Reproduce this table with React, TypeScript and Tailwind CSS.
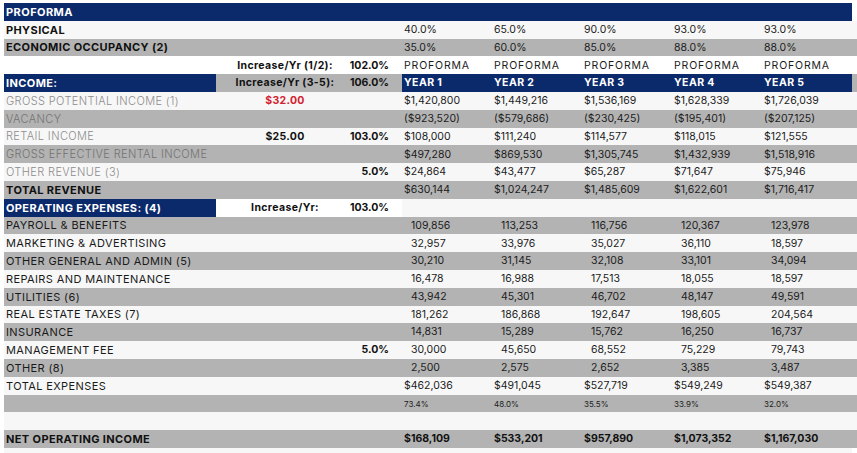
import React from "react";

const NAVY = "bg-[#0b2a6b]";
const GRAY = "bg-[#b3b3b3]";
const LIGHT = "bg-[#f7f7f7]";

type Row = {
  bg: string;
  label?: string;
  labelCls?: string;
  labelBg?: string;
  c2?: string;
  c2Cls?: string;
  c3?: string;
  c3Cls?: string;
  midBg?: string;
  years?: string[];
  yearCls?: string;
  yearBg?: string;
};

const labelGray = "text-[#8c8c8c] font-light";
const labelGrayDark = "text-[#727272] font-light";
const bold = "font-bold text-[#111]";
const mixed = "font-bold text-[#111] tracking-[0.035em]";
const wide = "tracking-[0.08em]";

const rows: Row[] = [
  { bg: LIGHT, label: "PHYSICAL", labelCls: bold, years: ["40.0%", "65.0%", "90.0%", "93.0%", "93.0%"] },
  { bg: GRAY, label: "ECONOMIC OCCUPANCY (2)", labelCls: bold, years: ["35.0%", "60.0%", "85.0%", "88.0%", "88.0%"] },
  { bg: "bg-white", c2: "Increase/Yr (1/2):", c2Cls: mixed, c3: "102.0%", c3Cls: bold, years: ["PROFORMA", "PROFORMA", "PROFORMA", "PROFORMA", "PROFORMA"], yearCls: wide },
  {
    bg: GRAY,
    label: "INCOME:",
    labelCls: "font-bold text-white",
    labelBg: NAVY,
    c2: "Increase/Yr (3-5):",
    c2Cls: mixed,
    c3: "106.0%",
    c3Cls: bold,
    years: ["YEAR 1", "YEAR 2", "YEAR 3", "YEAR 4", "YEAR 5"],
    yearCls: "font-bold text-white tracking-[0.04em]",
    yearBg: NAVY,
  },
  { bg: LIGHT, label: "GROSS POTENTIAL INCOME (1)", labelCls: labelGray, c2: "$32.00", c2Cls: "font-bold text-[#d3202e] tracking-[0.03em]", years: ["$1,420,800", "$1,449,216", "$1,536,169", "$1,628,339", "$1,726,039"] },
  { bg: GRAY, label: "VACANCY", labelCls: labelGrayDark, years: ["($923,520)", "($579,686)", "($230,425)", "($195,401)", "($207,125)"] },
  { bg: LIGHT, label: "RETAIL INCOME", labelCls: labelGray, c2: "$25.00", c2Cls: bold + " tracking-[0.03em]", c3: "103.0%", c3Cls: bold, years: ["$108,000", "$111,240", "$114,577", "$118,015", "$121,555"] },
  { bg: GRAY, label: "GROSS EFFECTIVE RENTAL INCOME", labelCls: labelGrayDark, years: ["$497,280", "$869,530", "$1,305,745", "$1,432,939", "$1,518,916"] },
  { bg: LIGHT, label: "OTHER REVENUE (3)", labelCls: labelGray, c3: "5.0%", c3Cls: bold + " pr-[6px]", years: ["$24,864", "$43,477", "$65,287", "$71,647", "$75,946"] },
  { bg: GRAY, label: "TOTAL REVENUE", labelCls: bold, years: ["$630,144", "$1,024,247", "$1,485,609", "$1,622,601", "$1,716,417"] },
  { bg: LIGHT, label: "OPERATING EXPENSES: (4)", labelCls: "font-bold text-white", labelBg: NAVY, c2: "Increase/Yr:", c2Cls: mixed, c3: "103.0%", c3Cls: bold, midBg: "bg-white" },
  { bg: GRAY, label: "PAYROLL & BENEFITS", years: ["109,856", "113,253", "116,756", "120,367", "123,978"], yearCls: "pl-[9px]" },
  { bg: LIGHT, label: "MARKETING & ADVERTISING", years: ["32,957", "33,976", "35,027", "36,110", "18,597"], yearCls: "pl-[9px]" },
  { bg: GRAY, label: "OTHER GENERAL AND ADMIN (5)", years: ["30,210", "31,145", "32,108", "33,101", "34,094"], yearCls: "pl-[9px]" },
  { bg: LIGHT, label: "REPAIRS AND MAINTENANCE", years: ["16,478", "16,988", "17,513", "18,055", "18,597"], yearCls: "pl-[9px]" },
  { bg: GRAY, label: "UTILITIES (6)", years: ["43,942", "45,301", "46,702", "48,147", "49,591"], yearCls: "pl-[9px]" },
  { bg: LIGHT, label: "REAL ESTATE TAXES (7)", years: ["181,262", "186,868", "192,647", "198,605", "204,564"], yearCls: "pl-[9px]" },
  { bg: GRAY, label: "INSURANCE", years: ["14,831", "15,289", "15,762", "16,250", "16,737"], yearCls: "pl-[9px]" },
  { bg: LIGHT, label: "MANAGEMENT FEE", c3: "5.0%", c3Cls: bold + " pr-[6px]", years: ["30,000", "45,650", "68,552", "75,229", "79,743"], yearCls: "pl-[9px]" },
  { bg: GRAY, label: "OTHER (8)", years: ["2,500", "2,575", "2,652", "3,385", "3,487"], yearCls: "pl-[9px]" },
  { bg: LIGHT, label: "TOTAL EXPENSES", years: ["$462,036", "$491,045", "$527,719", "$549,249", "$549,387"] },
  { bg: GRAY, years: ["73.4%", "48.0%", "35.5%", "33.9%", "32.0%"], yearCls: "text-[8px]" },
  { bg: LIGHT },
  { bg: GRAY, label: "NET OPERATING INCOME", labelCls: bold, years: ["$168,109", "$533,201", "$957,890", "$1,073,352", "$1,167,030"], yearCls: "font-bold text-[#111]" },
];

function TableRow({ r }: { r: Row }) {
  return (
    <div className={`grid grid-cols-[212px_138px_48px_90px_90px_90px_90px_90px] h-[17.8px] ${r.bg}`}>
      <div className={`flex items-center pl-[2px] pt-px whitespace-nowrap text-[11px] tracking-[0.035em] ${r.labelBg ?? ""} ${r.labelCls ?? "text-[#1a1a1a]"}`}>
        {r.label}
      </div>
      <div className={`flex items-center justify-center pt-px whitespace-nowrap ${r.midBg ?? ""} ${r.c2Cls ?? ""}`}>{r.c2}</div>
      <div className={`flex items-center justify-end pr-[13px] pt-px whitespace-nowrap ${r.midBg ?? ""} ${r.c3Cls ?? ""}`}>{r.c3}</div>
      {[0, 1, 2, 3, 4].map((i) => (
        <div
          key={i}
          className={`flex items-center pl-[2px] pt-px whitespace-nowrap text-[#1c1c1c] ${r.yearBg ?? ""} ${r.yearCls ?? ""}`}
        >
          {r.years ? r.years[i] : ""}
        </div>
      ))}
    </div>
  );
}

export default function App() {
  return (
    <div className="w-[857px] h-[453px] bg-white overflow-hidden pt-[3px] pl-[4px] text-[10.5px] leading-none [font-family:Inter,'Liberation_Sans',sans-serif]">
      <div className={`h-[17.8px] w-[848px] ${NAVY} flex items-center pl-[2px] pt-px text-white text-[11px] font-bold tracking-[0.04em]`}>PROFORMA</div>
      {rows.map((r, i) => (
        <TableRow key={i} r={r} />
      ))}
      <div className={`h-[10px] w-[848px] ${LIGHT}`} />
    </div>
  );
}
